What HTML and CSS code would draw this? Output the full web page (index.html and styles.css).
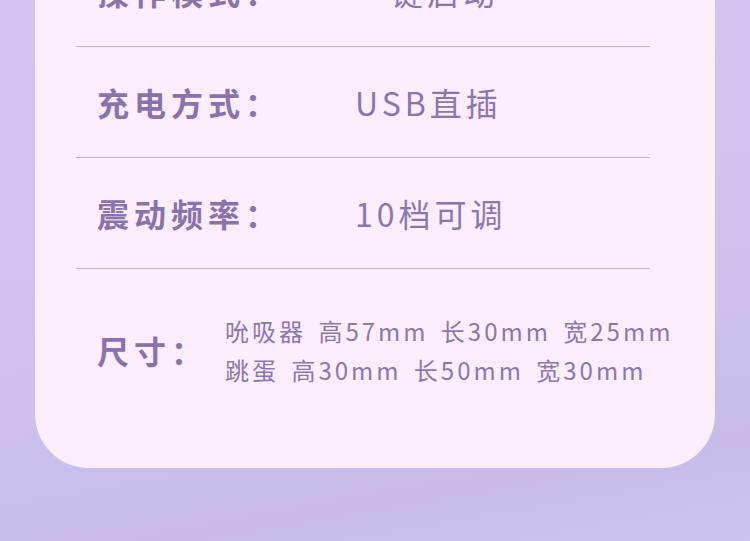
FILE: index.html
```html
<!DOCTYPE html>
<html lang="zh-CN">
<head>
  <meta charset="UTF-8" />
  <title>产品参数</title>
  <meta name="viewport" content="width=device-width, initial-scale=1.0">
  <link rel="stylesheet" href="styles.css">
</head>
<body>
  <div class="card">
    <div class="specs">
      <div class="row first">
        <span class="label">操作模式：</span>
        <span class="value">一键启动</span>
      </div>
      <div class="row">
        <span class="label">充电方式：</span>
        <span class="value">USB直插</span>
      </div>
      <div class="row">
        <span class="label">震动频率：</span>
        <span class="value">10档可调</span>
      </div>
      <div class="row size">
        <span class="label">尺寸：</span>
        <div class="value small">
          <div>吮吸器 高57mm 长30mm 宽25mm</div>
          <div>跳蛋 高30mm 长50mm 宽30mm</div>
        </div>
      </div>
    </div>
  </div>
</body>
</html>
```

FILE: styles.css
```css
html, body {
  height: 100%;
}

body {
  margin: 0;
  overflow: hidden;
  font-family: "Noto Sans CJK SC", "Noto Sans", sans-serif;
  background: linear-gradient(170deg, #d1c7ef 0%, #cdc3ed 55%, #c7bcea 85%, #cdc4ee 100%);
  color: #8b74b0;
}

.card {
  margin: -64px 0 0 35px;
  width: 680px;
  background-color: #fdeefe;
  border-radius: 0 0 54px 54px;
}

.specs {
  margin: 0 65px 0 41px;
}

.row {
  display: flex;
  align-items: center;
  height: 110px;
  padding-left: 21px;
  border-bottom: 1px solid #c9b1e6;
}

.label {
  width: 258px;
  flex-shrink: 0;
  font-size: 32px;
  font-weight: 600;
  letter-spacing: 5px;
  color: #8a72ad;
}

.value {
  font-size: 32px;
  letter-spacing: 4px;
  color: #8c76b1;
}

.row.size {
  height: auto;
  padding-top: 42px;
  padding-bottom: 79px;
  border-bottom: none;
}

.row.size .label {
  width: 128px;
}

.value.small {
  font-size: 24px;
  line-height: 39px;
  letter-spacing: 3px;
  word-spacing: 4px;
  white-space: nowrap;
}
```
